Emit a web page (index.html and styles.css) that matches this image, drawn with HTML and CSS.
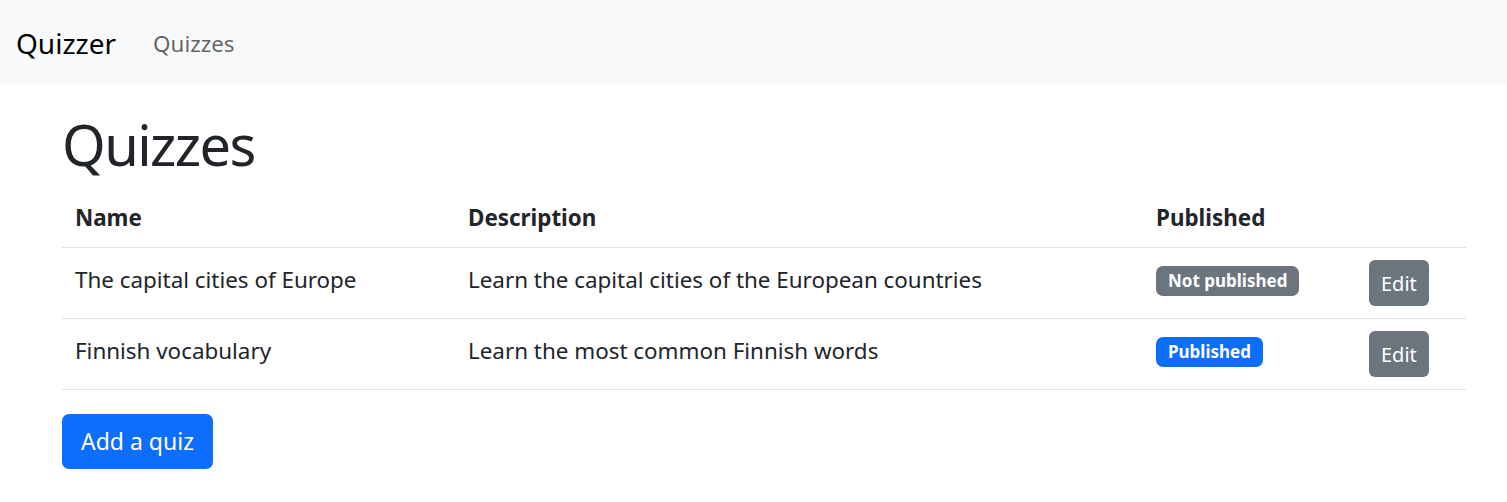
FILE: index.html
```html
<!DOCTYPE html>
<html lang="en">
<head>
<meta charset="utf-8">
<title>Quizzer</title>
<link rel="stylesheet" href="styles.css">
</head>
<body>
<nav class="navbar">
  <a class="brand" href="#">Quizzer</a>
  <a class="nav-link" href="#">Quizzes</a>
</nav>
<main class="container">
  <h1 class="title">Quizzes</h1>
  <table class="table">
    <colgroup>
      <col class="c-name"><col class="c-desc"><col class="c-pub"><col class="c-act">
    </colgroup>
    <thead>
      <tr><th>Name</th><th>Description</th><th>Published</th><th></th></tr>
    </thead>
    <tbody>
      <tr>
        <td>The capital cities of Europe</td>
        <td>Learn the capital cities of the European countries</td>
        <td><span class="badge badge-gray">Not published</span></td>
        <td><button class="btn btn-gray">Edit</button></td>
      </tr>
      <tr>
        <td>Finnish vocabulary</td>
        <td>Learn the most common Finnish words</td>
        <td><span class="badge badge-blue">Published</span></td>
        <td><button class="btn btn-gray">Edit</button></td>
      </tr>
    </tbody>
  </table>
  <button class="btn btn-blue btn-add">Add a quiz</button>
</main>
</body>
</html>
```
FILE: styles.css
```css
* { box-sizing: border-box; }
body {
  margin: 0;
  font-family: "Noto Sans", "Open Sans", sans-serif;
  font-size: 22.4px;
  color: #212529;
  background: #fff;
}
.navbar {
  height: 84px;
  background: #f8f9fa;
  display: flex;
  align-items: center;
  padding: 2px 16px 0;
  gap: 37px;
}
.brand {
  font-size: 28px;
  color: #000;
  text-decoration: none;
}
.nav-link {
  font-size: 22.4px;
  color: rgba(0,0,0,.62);
  text-decoration: none;
}
.container {
  margin-left: 62px;
  width: 1404px;
}
.title {
  font-size: 56px;
  font-weight: 400;
  letter-spacing: -1.6px;
  line-height: 67px;
  margin: 27px 0 11px;
}
.table {
  width: 100%;
  border-collapse: collapse;
  margin-bottom: 24px;
}
.c-name { width: 393px; }
.c-desc { width: 688px; }
.c-pub { width: 213px; }
.c-act { width: 110px; }
.table th, .table td {
  text-align: left;
  border-bottom: 1px solid #dee2e6;
  vertical-align: middle;
}
.table th { height: 58px; padding: 0 13px; font-weight: 700; }
.table td { height: 71px; padding: 0 13px 6px; }
.badge {
  display: inline-block;
  font-size: 17px;
  font-weight: 700;
  color: #fff;
  padding: 6px 12px;
  line-height: 18px;
  border-radius: 7px;
}
.badge-gray { background: #6c757d; }
.badge-blue { background: #0d6efd; }
.btn {
  border: 0;
  font-family: inherit;
  color: #fff;
  border-radius: 6px;
  cursor: pointer;
}
.btn-gray {
  display: block;
  margin-top: 7px;
  background: #6c757d;
  font-size: 20px;
  height: 46px;
  padding: 0 12px;
}
.btn-blue { background: #0d6efd; }
.btn-add {
  font-size: 23px;
  height: 55px;
  padding: 0 19px;
  border-radius: 7px;
}
```
